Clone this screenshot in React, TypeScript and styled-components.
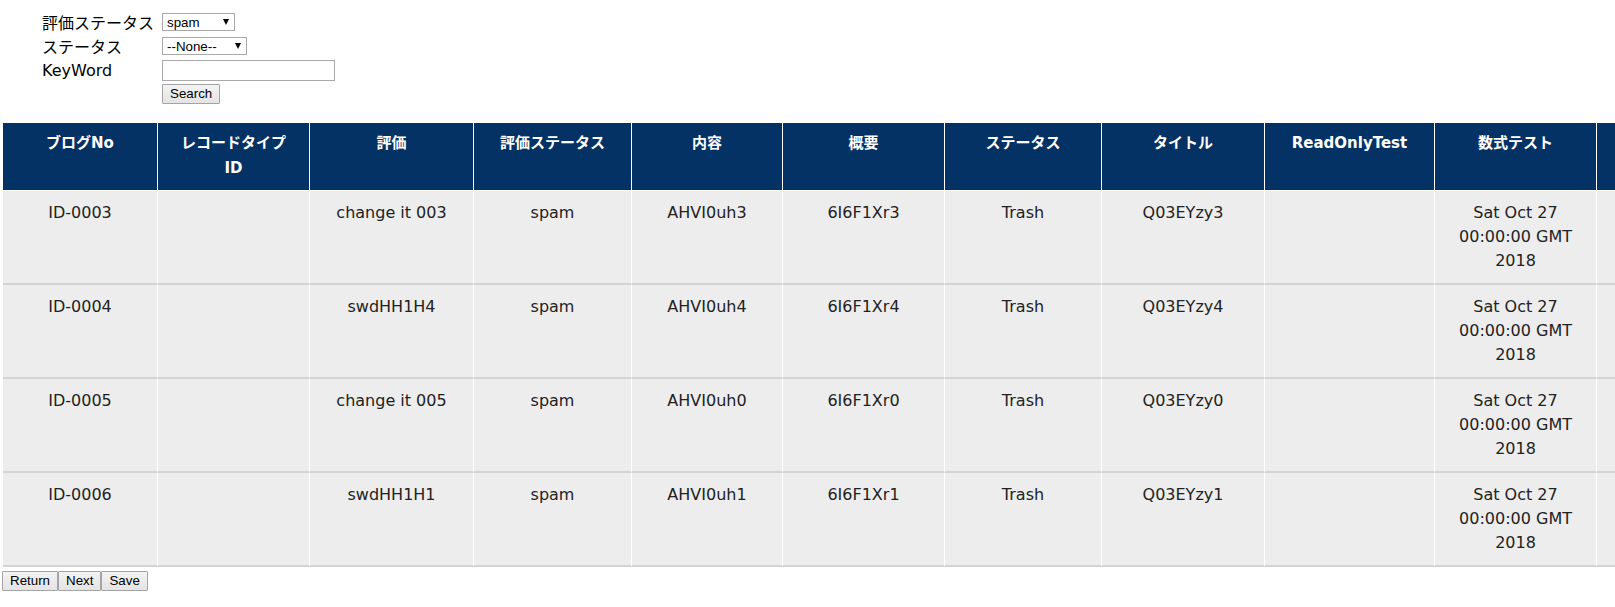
import React from "react";
import styled, { createGlobalStyle } from "styled-components";

const GlobalStyle = createGlobalStyle`
  html, body {
    margin: 0;
    padding: 0;
    background: #ffffff;
  }
  body {
    font-family: "DejaVu Sans", "Noto Sans CJK JP", sans-serif;
  }
`;

const Page = styled.div`
  padding: 0 0 0 2px;
  overflow: hidden;
`;

const SearchForm = styled.div`
  display: grid;
  grid-template-columns: 120px auto;
  grid-auto-rows: 24px;
  align-items: center;
  justify-content: start;
  padding: 10px 0 0 40px;
`;

const Label = styled.div`
  font-family: "DejaVu Sans", "Noto Sans CJK JP", sans-serif;
  font-size: 16px;
  color: #000;
  white-space: nowrap;
`;

const SelectWrap = styled.div<{ $w: number }>`
  position: relative;
  width: ${(p) => p.$w}px;
  height: 18px;
  &::after {
    content: "";
    position: absolute;
    right: 6px;
    top: 50%;
    margin-top: -3px;
    border-left: 3.5px solid transparent;
    border-right: 3.5px solid transparent;
    border-top: 6px solid #000;
    pointer-events: none;
  }
`;

const Select = styled.select`
  appearance: none;
  -webkit-appearance: none;
  display: block;
  width: 100%;
  height: 100%;
  box-sizing: border-box;
  margin: 0;
  padding: 0 0 0 4px;
  border: 1px solid #a9a9a9;
  border-radius: 0;
  background: #fff;
  color: #000;
  font-family: "Liberation Sans", Arial, sans-serif;
  font-size: 13.33px;
  outline: none;
`;

const TextInput = styled.input`
  display: block;
  width: 173px;
  height: 21px;
  box-sizing: border-box;
  margin: 0;
  padding: 0 3px;
  border: 1px solid #a9a9a9;
  font-family: "Liberation Sans", Arial, sans-serif;
  font-size: 13.33px;
  outline: none;
`;

const Button = styled.button`
  display: block;
  height: 20px;
  box-sizing: border-box;
  margin: 0;
  padding: 0 7px;
  border: 1px solid #a4a4a4;
  border-radius: 1px;
  background: linear-gradient(#f3f3f3, #e4e4e4);
  color: #000;
  font-family: "Liberation Sans", Arial, sans-serif;
  font-size: 13.33px;
  line-height: 18px;
  cursor: pointer;
`;

const Table = styled.table`
  margin: 17px 0 0 1px;
  border-collapse: separate;
  border-spacing: 0;
  table-layout: fixed;
  width: 1754px;
  font-family: "DejaVu Sans", "Noto Sans CJK JP", sans-serif;
`;

const HeadCell = styled.th<{ $w: number }>`
  width: ${(p) => p.$w}px;
  box-sizing: border-box;
  padding: 8px 10px 9px;
  background: #043264;
  color: #ffffff;
  font-size: 15px;
  font-weight: bold;
  line-height: 25px;
  text-align: center;
  vertical-align: top;
  border-right: 1px solid #ffffff;
  border-bottom: 1px solid #ffffff;
`;

const HeadLine = styled.span`
  display: block;
`;

const Cell = styled.td`
  padding: 10px;
  background: #ededed;
  color: #222;
  font-size: 16px;
  line-height: 24px;
  text-align: center;
  vertical-align: top;
  border-right: 1px solid #ffffff;
  border-bottom: 2px solid #d3d3d3;
  word-wrap: break-word;
`;

const ButtonBar = styled.div`
  display: flex;
  margin-top: 4px;
`;

const columns: { lines: string[]; w: number }[] = [
  { lines: ["ブログNo"], w: 155 },
  { lines: ["レコードタイプ", "ID"], w: 152 },
  { lines: ["評価"], w: 164 },
  { lines: ["評価ステータス"], w: 158 },
  { lines: ["内容"], w: 151 },
  { lines: ["概要"], w: 162 },
  { lines: ["ステータス"], w: 157 },
  { lines: ["タイトル"], w: 163 },
  { lines: ["ReadOnlyTest"], w: 170 },
  { lines: ["数式テスト"], w: 162 },
  { lines: [""], w: 160 },
];

const date = "Sat Oct 27 00:00:00 GMT 2018";

const rows: string[][] = [
  ["ID-0003", "", "change it 003", "spam", "AHVI0uh3", "6I6F1Xr3", "Trash", "Q03EYzy3", "", date, ""],
  ["ID-0004", "", "swdHH1H4", "spam", "AHVI0uh4", "6I6F1Xr4", "Trash", "Q03EYzy4", "", date, ""],
  ["ID-0005", "", "change it 005", "spam", "AHVI0uh0", "6I6F1Xr0", "Trash", "Q03EYzy0", "", date, ""],
  ["ID-0006", "", "swdHH1H1", "spam", "AHVI0uh1", "6I6F1Xr1", "Trash", "Q03EYzy1", "", date, ""],
];

export default function App() {
  return (
    <Page>
      <GlobalStyle />
      <SearchForm>
        <Label>評価ステータス</Label>
        <SelectWrap $w={73}>
          <Select defaultValue="spam">
            <option value="spam">spam</option>
          </Select>
        </SelectWrap>
        <Label>ステータス</Label>
        <SelectWrap $w={85}>
          <Select defaultValue="none">
            <option value="none">--None--</option>
          </Select>
        </SelectWrap>
        <Label>KeyWord</Label>
        <TextInput type="text" />
        <Label />
        <div>
          <Button type="button">Search</Button>
        </div>
      </SearchForm>
      <Table>
        <thead>
          <tr>
            {columns.map((c, i) => (
              <HeadCell key={i} $w={c.w}>
                {c.lines.map((l, li) => (
                  <HeadLine key={li}>{l}</HeadLine>
                ))}
              </HeadCell>
            ))}
          </tr>
        </thead>
        <tbody>
          {rows.map((r, ri) => (
            <tr key={ri}>
              {r.map((v, ci) => (
                <Cell key={ci}>{v}</Cell>
              ))}
            </tr>
          ))}
        </tbody>
      </Table>
      <ButtonBar>
        <Button type="button">Return</Button>
        <Button type="button">Next</Button>
        <Button type="button">Save</Button>
      </ButtonBar>
    </Page>
  );
}
